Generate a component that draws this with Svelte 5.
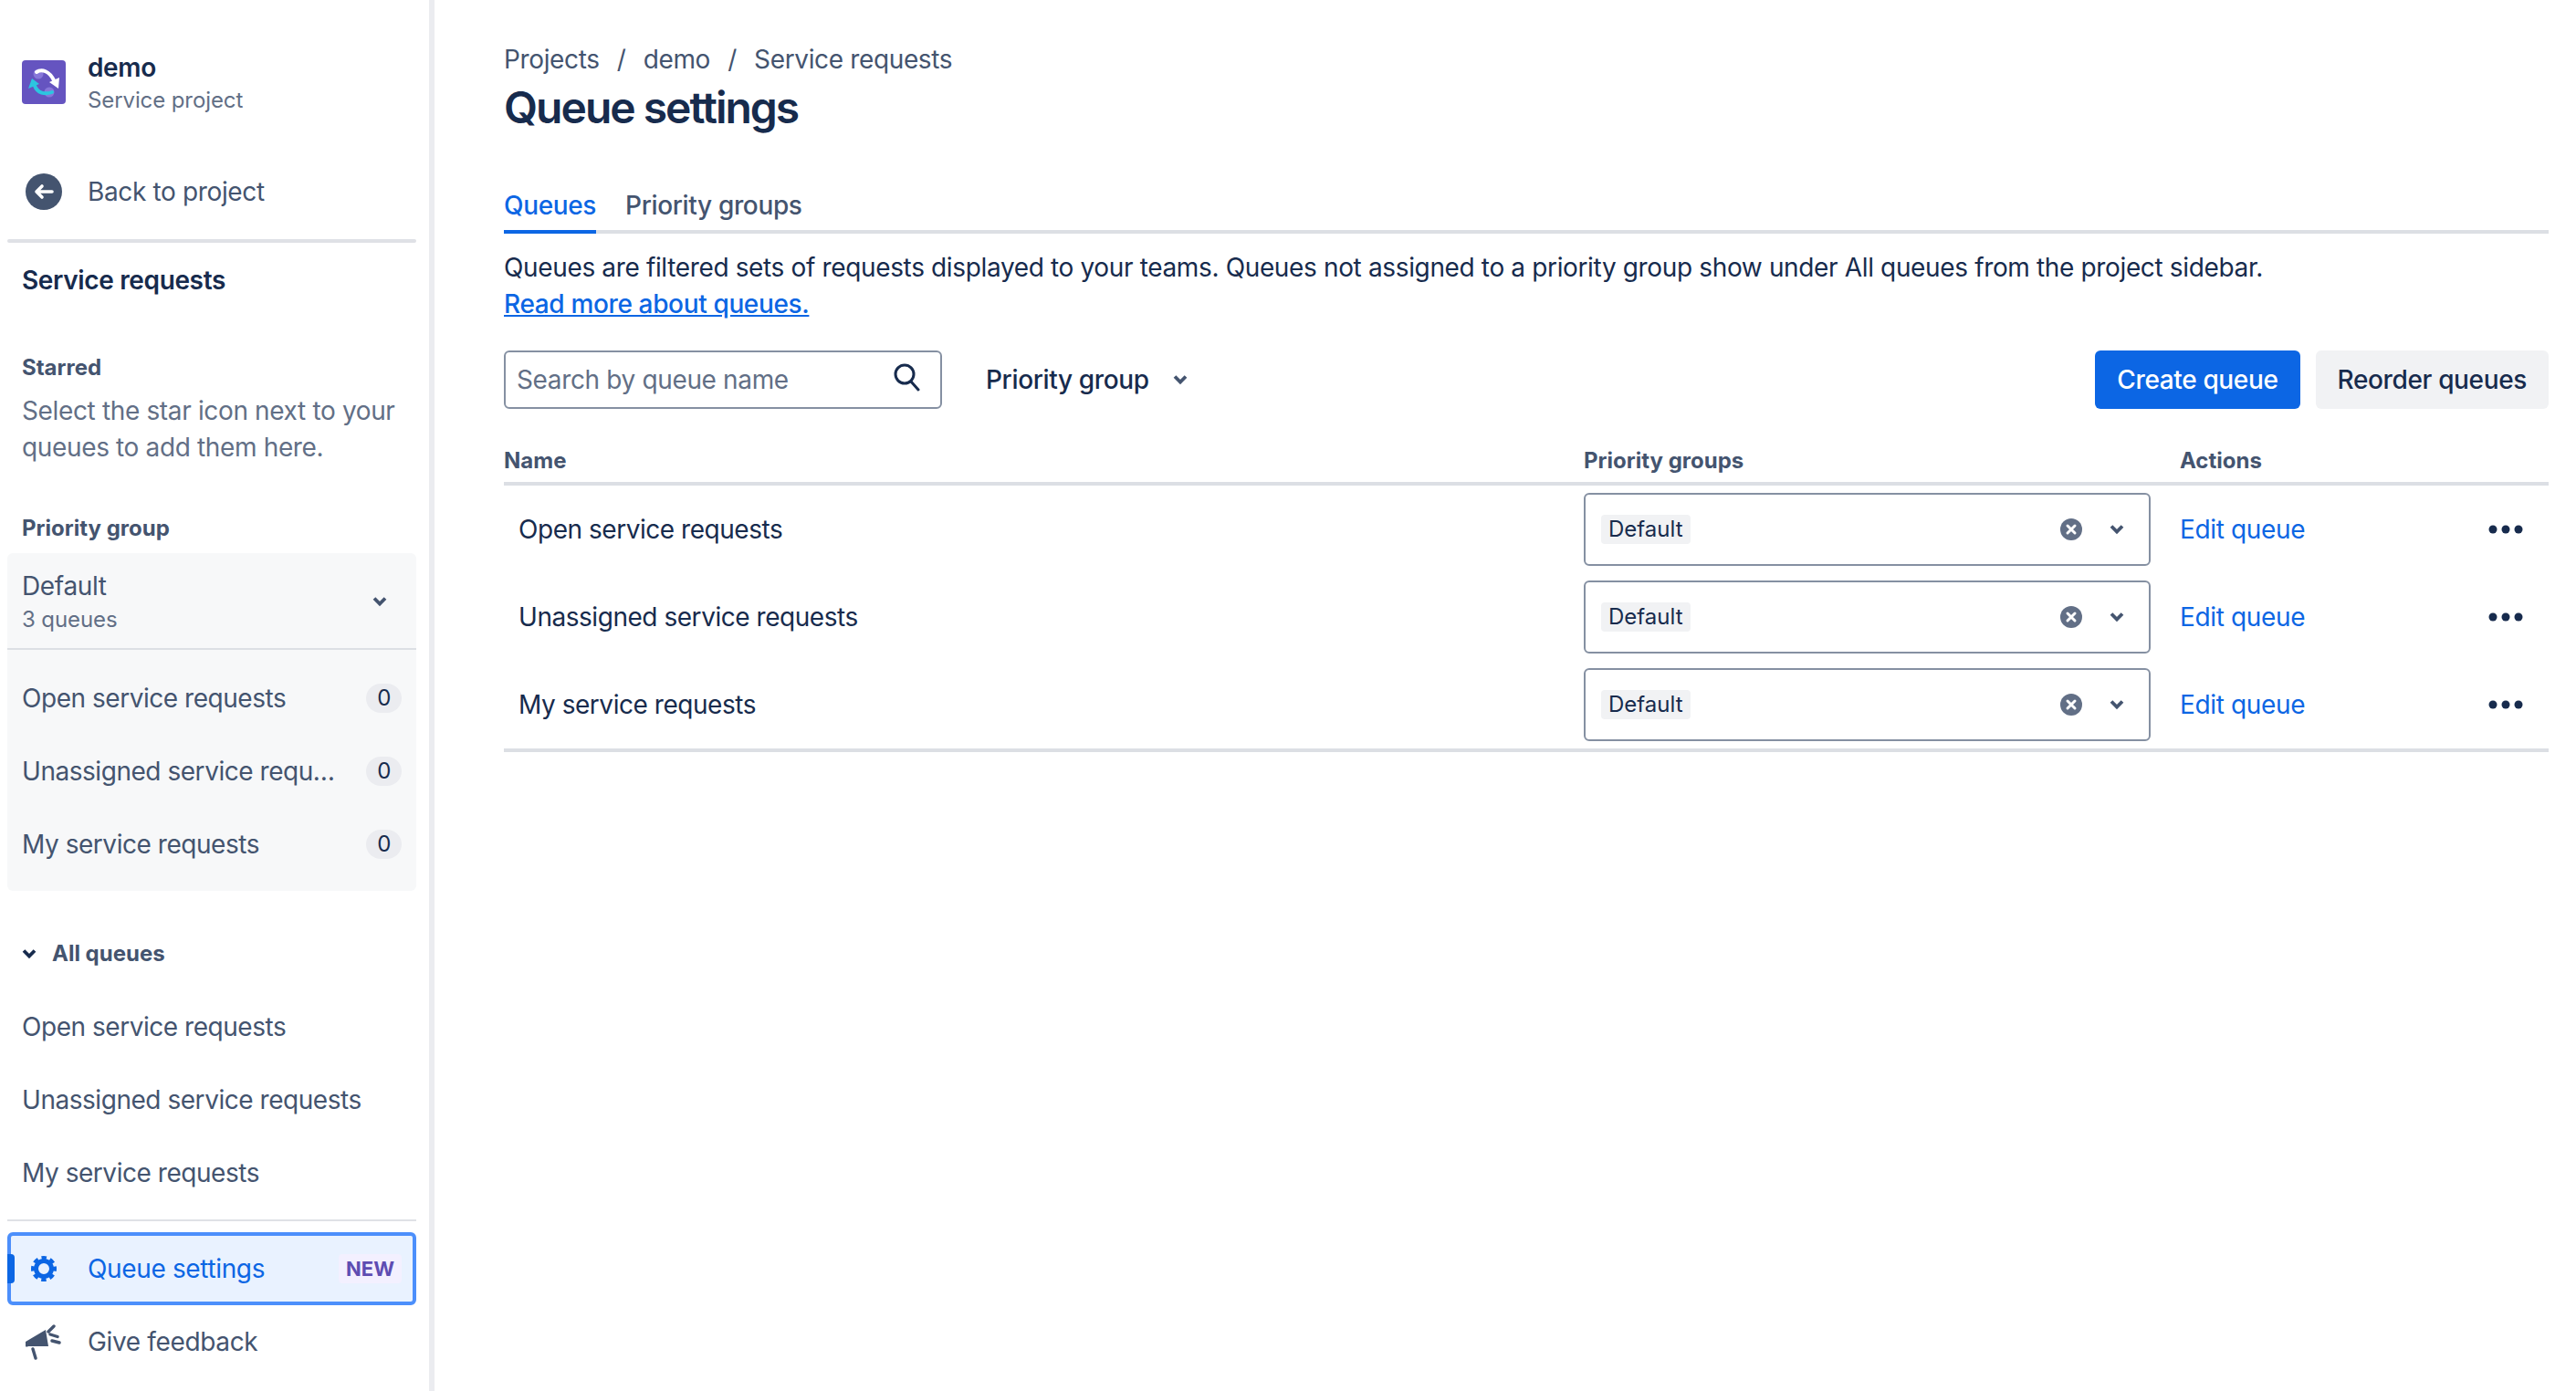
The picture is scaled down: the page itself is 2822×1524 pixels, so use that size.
<script>
    const starred = ['Open service requests', 'Unassigned service requests', 'My service requests'];
    const tabs = ['Queues', 'Priority groups'];
</script>

<div class="page">
    <aside class="sidebar">
        <div class="proj">
            <svg class="logo" viewBox="0 0 48 48" aria-hidden="true">
                <rect width="48" height="48" rx="4" fill="#6554c0" />
                <circle cx="18" cy="15" r="5.5" fill="#8777d9" />
                <circle cx="30" cy="35" r="5.5" fill="#8777d9" />
                <path d="M16 13C22 9 30 12 35 22" fill="none" stroke="#fff" stroke-width="4" stroke-linecap="round" />
                <path d="M40 31l1-12-11 5z" fill="#fff" />
                <path d="M14 28C17 36 25 38 33 35" fill="none" stroke="#2cc5e0" stroke-width="4" stroke-linecap="round" />
                <path d="M7 31l12-5-8-6z" fill="#2cc5e0" />
            </svg>
            <div>
                <div class="proj-name">demo</div>
                <div class="proj-type">Service project</div>
            </div>
        </div>

        <div class="nav-item back">
            <svg class="nav-icon" viewBox="0 0 40 40" aria-hidden="true">
                <circle cx="20" cy="20" r="20" fill="#44546f" />
                <path d="M29 20H12M18 14l-6 6 6 6" fill="none" stroke="#fff" stroke-width="3.6" stroke-linecap="round" stroke-linejoin="round" />
            </svg>
            <span>Back to project</span>
        </div>
        <div class="rule thick"></div>

        <div class="section-title">Service requests</div>

        <div class="label starred">Starred</div>
        <p class="hint">Select the star icon next to your queues to add them here.</p>

        <div class="label priority">Priority group</div>
        <div class="panel">
            <div class="panel-head">
                <div>
                    <div class="panel-name">Default</div>
                    <div class="panel-count">3 queues</div>
                </div>
                <svg class="chev panel-chev" viewBox="0 0 16 12" aria-hidden="true"><path d="M2 2.500l6 6 6-6" /></svg>
            </div>
            <div class="panel-items">
                {#each starred as name, i}
                    <div class="item">
                        <span class="item-text">{i === 1 ? 'Unassigned service requ…' : name}</span>
                        <span class="badge">0</span>
                    </div>
                {/each}
            </div>
        </div>

        <div class="all-head">
            <svg class="chev all-chev" viewBox="0 0 16 12" aria-hidden="true"><path d="M2 2.500l6 6 6-6" /></svg>
            <span>All queues</span>
        </div>
        <div class="all-items">
            {#each starred as name}
                <div class="item">{name}</div>
            {/each}
        </div>
        <div class="rule"></div>

        <div class="nav-item active">
            <span class="marker"></span>
            <svg class="nav-icon gear" viewBox="0 0 28 28" aria-hidden="true">
                <circle cx="14" cy="14" r="8.500" fill="none" stroke="#0c66e4" stroke-width="5" />
                <circle cx="14" cy="14" r="12" fill="none" stroke="#0c66e4" stroke-width="4" stroke-dasharray="5.4 4" stroke-dashoffset="2.7" />
            </svg>
            <span class="active-text">Queue settings</span>
            <span class="lozenge">NEW</span>
        </div>
        <div class="nav-item">
            <svg class="nav-icon" viewBox="0 0 40 40" aria-hidden="true">
                <path d="M0 20L22 7l3 18H3a2 2 0 0 1-3-5z" fill="#44546f" />
                <path d="M8 28l3 10M25 9l6-6M27 12l8 2.500M29 19l8 2" fill="none" stroke="#44546f" stroke-width="3.4" stroke-linecap="round" />
            </svg>
            <span>Give feedback</span>
        </div>
    </aside>

    <main class="content">
        <nav class="crumbs">
            <span>Projects</span><span class="sep">/</span><span>demo</span><span class="sep">/</span><span>Service requests</span>
        </nav>
        <h1>Queue settings</h1>

        <div class="tabs">
            {#each tabs as tab, i}
                <div class="tab" class:selected={i === 0}>{tab}</div>
            {/each}
        </div>

        <p class="desc">
            Queues are filtered sets of requests displayed to your teams. Queues not assigned to a priority group show under All queues from the project sidebar.<br />
            <a href="#queues">Read more about queues.</a>
        </p>

        <div class="toolbar">
            <div class="search">
                <span class="placeholder">Search by queue name</span>
                <svg class="search-icon" viewBox="0 0 32 32" aria-hidden="true">
                    <circle cx="14" cy="13" r="10" />
                    <path d="M21 21l8 9" />
                </svg>
            </div>
            <div class="filter">
                <span>Priority group</span>
                <svg class="chev filter-chev" viewBox="0 0 16 12" aria-hidden="true"><path d="M2 2.500l6 6 6-6" /></svg>
            </div>
            <button class="btn primary">Create queue</button>
            <button class="btn">Reorder queues</button>
        </div>

        <div class="table">
            <div class="thead">
                <div>Name</div>
                <div>Priority groups</div>
                <div>Actions</div>
            </div>
            {#each starred as name}
                <div class="row">
                    <div class="row-name">{name}</div>
                    <div class="select">
                        <span class="tag">Default</span>
                        <svg class="clear" viewBox="0 0 24 24" aria-hidden="true">
                            <circle cx="12" cy="12" r="12" fill="#626f86" />
                            <path d="M8 8l8 8M16 8l-8 8" stroke="#fff" stroke-width="3" stroke-linecap="round" />
                        </svg>
                        <svg class="chev select-chev" viewBox="0 0 16 12" aria-hidden="true"><path d="M2 2.500l6 6 6-6" /></svg>
                    </div>
                    <div class="row-actions">
                        <span class="edit">Edit queue</span>
                        <svg class="dots" viewBox="0 0 38 10" aria-hidden="true">
                            <circle cx="5" cy="5" r="4.5" /><circle cx="19" cy="5" r="4.5" /><circle cx="33" cy="5" r="4.5" />
                        </svg>
                    </div>
                </div>
            {/each}
        </div>
    </main>
</div>

<style>
    :global(body) {
        background: #fff;
        color: #172b4d;
        font-family: Inter, 'Liberation Sans', sans-serif;
        font-size: 28px;
        letter-spacing: -0.355px;
    }

    .page {
        display: flex;
        min-height: 100vh;
    }

    /* sidebar */
    .sidebar {
        flex: none;
        width: 470px;
        border-right: 6px solid #ebecf0;
        color: #44546f;
    }
    .proj {
        display: flex;
        align-items: center;
        gap: 24px;
        padding: 54px 24px 0;
    }
    .logo {
        width: 48px;
        height: 48px;
    }
    .proj-name {
        font-weight: 600;
        line-height: 40px;
        color: #172b4d;
    }
    .proj-type {
        font-size: 24px;
        letter-spacing: -0.1px;
        line-height: 32px;
        color: #626f86;
    }
    .nav-item {
        position: relative;
        display: flex;
        align-items: center;
        height: 80px;
        padding-left: 28px;
        margin-right: 14px;
    }
    .nav-icon {
        flex: none;
        width: 40px;
        height: 40px;
        margin-right: 28px;
    }
    .back {
        margin-top: 44px;
    }
    .rule {
        height: 2px;
        margin: 11px 14px 0 8px;
        background: #dfe1e6;
    }
    .rule.thick {
        height: 4px;
        margin-top: 12px;
        border-radius: 2px;
    }
    .section-title {
        margin: 21px 24px 0;
        font-weight: 600;
        line-height: 40px;
        color: #172b4d;
    }
    .label {
        margin-left: 24px;
        padding-top: 1px;
        font-size: 24px;
        font-weight: 700;
        letter-spacing: 0;
        line-height: 32px;
    }
    .label.starred {
        margin-top: 59px;
    }
    .label.priority {
        margin-top: 52px;
    }
    .hint {
        margin: 11px 24px 0;
        line-height: 40px;
        color: #626f86;
    }
    .panel {
        margin: 11px 14px 0 8px;
        padding-bottom: 11px;
        background: #f7f8f9;
        border-radius: 6px;
    }
    .panel-head {
        display: flex;
        align-items: center;
        justify-content: space-between;
        height: 104px;
        padding: 0 32px 0 16px;
        border-bottom: 2px solid #dcdfe4;
    }
    .panel-name {
        line-height: 40px;
    }
    .panel-count {
        padding-top: 1px;
        font-size: 24px;
        letter-spacing: -0.1px;
        line-height: 32px;
        color: #626f86;
    }
    .panel-items {
        padding-top: 13px;
    }
    .panel .item {
        padding: 0 16px;
    }
    .item {
        display: flex;
        align-items: center;
        justify-content: space-between;
        height: 80px;
        letter-spacing: -0.46px;
    }
    .item-text {
        white-space: nowrap;
    }
    .badge {
        width: 39px;
        height: 32px;
        border-radius: 16px;
        background: #ebecf0;
        color: #172b4d;
        font-size: 24px;
        line-height: 32px;
        text-align: center;
    }
    .chev {
        flex: none;
        fill: none;
        stroke: #44546f;
        stroke-width: 3.8;
    }
    .panel-chev {
        width: 16px;
        height: 12px;
        margin-top: 2px;
    }
    .all-head {
        display: flex;
        align-items: center;
        gap: 17px;
        margin: 53px 0 0 24px;
        font-size: 24px;
        font-weight: 700;
        letter-spacing: 0;
        line-height: 32px;
    }
    .all-chev {
        width: 16px;
        height: 12px;
        stroke: #172b4d;
    }
    .all-items {
        margin: 24px 14px 0 24px;
    }
    .active {
        box-sizing: border-box;
        margin: 12px 14px 0 8px;
        padding-left: 16px;
        padding-right: 12px;
        background: #e9f2ff;
        border: 4px solid #4c8ffb;
        border-radius: 6px;
    }
    .marker {
        position: absolute;
        left: -4px;
        top: 20px;
        width: 8px;
        height: 32px;
        background: #0c66e4;
        border-radius: 0 4px 4px 0;
    }
    .gear {
        width: 28px;
        height: 28px;
        margin: 0 34px 0 6px;
    }
    .active-text {
        flex: 1;
        color: #0c66e4;
    }
    .lozenge {
        padding: 0 8px;
        height: 32px;
        background: #f3f0ff;
        border-radius: 4px;
        color: #5e4db2;
        font-size: 22px;
        font-weight: 700;
        letter-spacing: 0;
        line-height: 32px;
    }

    /* main */
    .content {
        flex: 1;
        min-width: 0;
        padding: 45px 30px 0 76px;
    }
    .crumbs {
        display: flex;
        line-height: 40px;
        color: #44546f;
    }
    .sep {
        width: 48px;
        text-align: center;
    }
    h1 {
        margin: 5px 0 0;
        font-size: 48px;
        font-weight: 600;
        letter-spacing: -2px;
        line-height: 56px;
    }
    .tabs {
        display: flex;
        gap: 32px;
        margin-top: 59px;
        border-bottom: 4px solid #dcdfe4;
    }
    .tab {
        padding-bottom: 7px;
        margin-bottom: -4px;
        line-height: 40px;
        color: #44546f;
        font-weight: 500;
    }
    .tab.selected {
        color: #0c66e4;
        border-bottom: 4px solid #0c66e4;
    }
    .desc {
        margin: 17px 0 0;
        line-height: 40px;
    }
    a {
        color: #0c66e4;
        font-weight: 500;
    }
    .toolbar {
        display: flex;
        align-items: center;
        margin-top: 31px;
    }
    .search {
        box-sizing: border-box;
        display: flex;
        align-items: center;
        justify-content: space-between;
        width: 480px;
        height: 64px;
        padding: 0 21px 0 12px;
        border: 2px solid #8590a2;
        border-radius: 6px;
    }
    .placeholder {
        color: #626f86;
    }
    .search-icon {
        width: 32px;
        height: 32px;
        margin-bottom: 6px;
        fill: none;
        stroke: #172b4d;
        stroke-width: 3;
        stroke-linecap: round;
    }
    .filter {
        display: flex;
        align-items: center;
        flex: 1;
        gap: 26px;
        margin-left: 48px;
        font-weight: 500;
    }
    .filter-chev {
        width: 16px;
        height: 12px;
    }
    .btn {
        all: unset;
        box-sizing: border-box;
        height: 64px;
        padding: 0 24px;
        margin-left: 17px;
        background: #f1f2f4;
        border-radius: 6px;
        font-weight: 500;
        line-height: 64px;
    }
    .btn.primary {
        background: #0c66e4;
        color: #fff;
    }
    .thead,
    .row {
        display: grid;
        grid-template-columns: 1183px 653px 1fr;
    }
    .thead {
        padding: 41px 0 7px;
        border-bottom: 4px solid #dcdfe4;
        color: #44546f;
        font-size: 24px;
        font-weight: 700;
        letter-spacing: 0;
        line-height: 32px;
    }
    .row {
        align-items: center;
        height: 96px;
    }
    .row:last-child {
        box-sizing: border-box;
        height: 100px;
        border-bottom: 4px solid #dcdfe4;
    }
    .row-name {
        padding-left: 16px;
        letter-spacing: -0.46px;
    }
    .select {
        box-sizing: border-box;
        display: flex;
        align-items: center;
        width: 621px;
        height: 80px;
        padding: 0 27px 0 17px;
        border: 2px solid #8590a2;
        border-radius: 6px;
    }
    .tag {
        margin-right: auto;
        padding: 0 8px;
        background: #f1f2f4;
        border-radius: 4px;
        font-size: 24px;
        letter-spacing: 0;
        line-height: 32px;
    }
    .clear {
        width: 24px;
        height: 24px;
        margin-right: 30px;
    }
    .select-chev {
        width: 16px;
        height: 12px;
    }
    .row-actions {
        display: flex;
        align-items: center;
        justify-content: space-between;
        padding-right: 28px;
    }
    .edit {
        color: #0c66e4;
    }
    .dots {
        width: 38px;
        height: 10px;
        fill: #172b4d;
    }
</style>
